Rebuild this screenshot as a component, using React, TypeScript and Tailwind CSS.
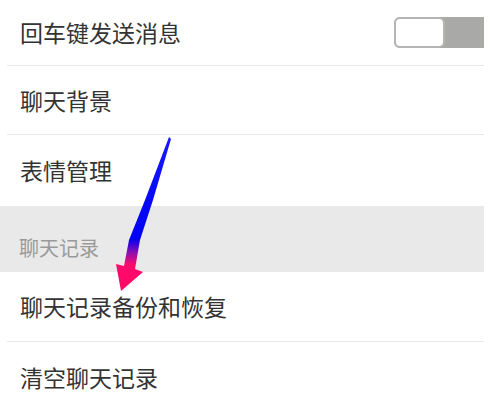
import React from 'react';

const font = { fontFamily: '"Noto Sans CJK SC", "Noto Sans", sans-serif' };

const Divider = () => <div className="ml-[7px] h-px bg-[#e8e8e8]" />;

const Row = ({ label, h, children }: { label: string; h: string; children?: React.ReactNode }) => (
  <div className={`flex items-center justify-between pl-[20px] ${h}`}>
    <span className="text-[23px] leading-none text-[#333333]">{label}</span>
    {children}
  </div>
);

export default function App() {
  return (
    <div className="relative w-[495px] h-[403px] overflow-hidden bg-white" style={font}>
      <div className="flex w-[484px] flex-col">
        <div className="flex h-[65px] items-center justify-between pl-[20px]">
          <span className="text-[23px] leading-none text-[#333333]">回车键发送消息</span>
          <div className="flex h-[31px] w-[90px] rounded-l-[6px] bg-[#a9aaa7]">
            <div className="w-[51px] rounded-[6px] border-2 border-[#b4b4b2] bg-white" />
          </div>
        </div>
        <Divider />
        <Row label="聊天背景" h="h-[68px]" />
        <Divider />
        <Row label="表情管理" h="h-[71px]" />
        <div className="flex h-[66px] items-start bg-[#e9e9e9] pl-[19px] pt-[32px]">
          <span className="text-[20px] leading-none text-[#9a9a9a]">聊天记录</span>
        </div>
        <Row label="聊天记录备份和恢复" h="h-[69px]" />
        <Divider />
        <Row label="清空聊天记录" h="h-[70px]" />
      </div>

      <svg className="pointer-events-none absolute left-0 top-0" width="495" height="403">
        <defs>
          <linearGradient id="arr" gradientUnits="userSpaceOnUse" x1="0" y1="137" x2="0" y2="291">
            <stop offset="0" stopColor="#1818ff" />
            <stop offset="0.66" stopColor="#0000f4" />
            <stop offset="0.75" stopColor="#8a10b0" />
            <stop offset="0.83" stopColor="#ff0a6c" />
            <stop offset="1" stopColor="#ff0a66" />
          </linearGradient>
        </defs>
        <polygon
          points="169,137 171,139 153,200 140,240 135,269 143,272 121,291 116,264 124,266 129,240 145,200"
          fill="url(#arr)"
        />
      </svg>
    </div>
  );
}
